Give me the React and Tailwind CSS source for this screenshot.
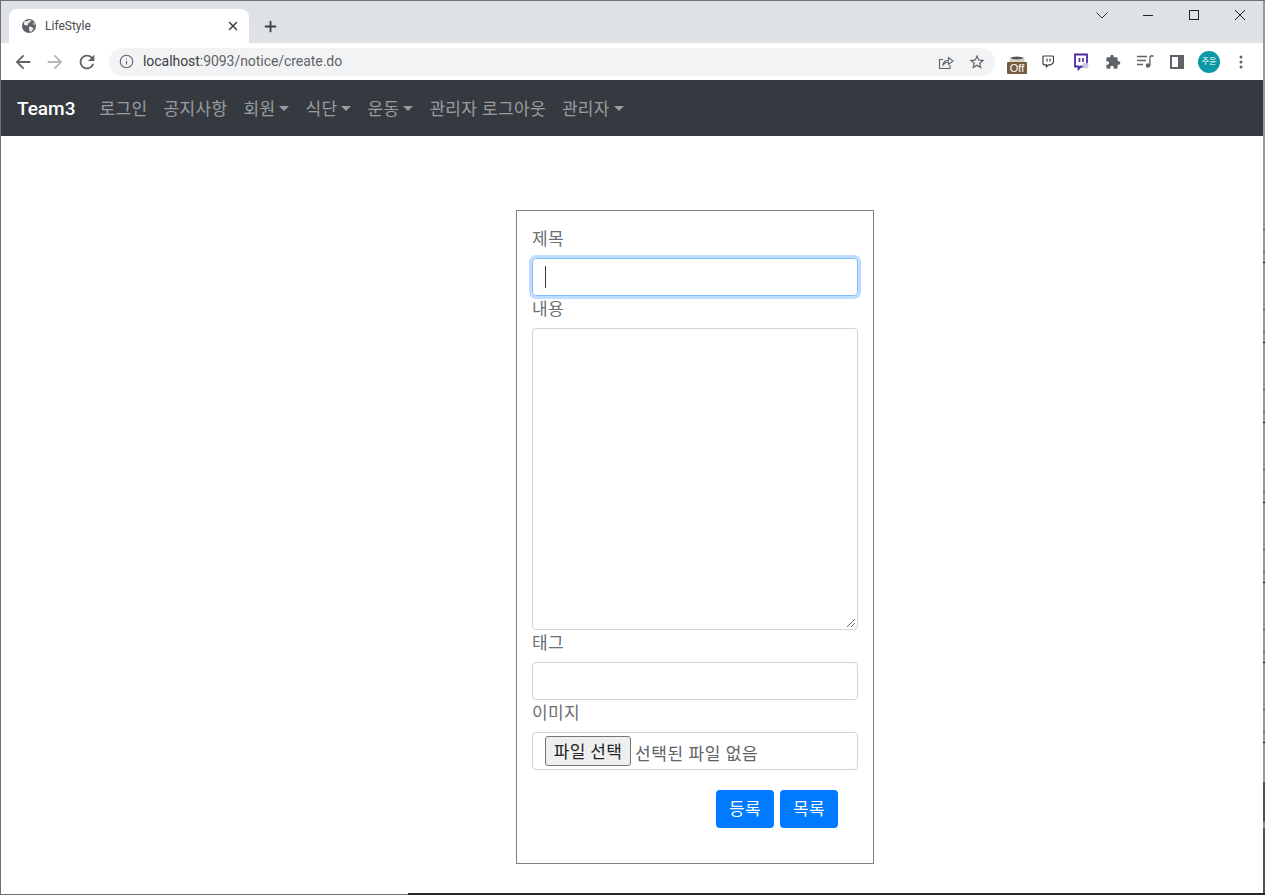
import { Info, Plus, X } from 'lucide-react'

const ticks = [
  { y: 229 }, { y: 251 }, { y: 262, dark: true },
  { y: 309 }, { y: 331 }, { y: 342, dark: true },
  { y: 389 }, { y: 411 }, { y: 422, dark: true },
  { y: 469 }, { y: 491 }, { y: 502, dark: true },
  { y: 549 }, { y: 571 }, { y: 582, dark: true },
  { y: 629 }, { y: 651 }, { y: 662, dark: true },
  { y: 709 }, { y: 731 }, { y: 742, dark: true },
]

function MaterialIcon({ size, d, className }) {
  return (
    <svg width={size} height={size} viewBox="0 0 24 24" fill="currentColor" className={className}>
      <path d={d} />
    </svg>
  )
}

function Globe() {
  return (
    <svg width="16" height="16" viewBox="0 0 16 16" className="shrink-0">
      <circle cx="8" cy="8" r="7" fill="#5f6368" />
      <path d="M3 3.500 6.500 3 8 2l2.500.5L9 4.500 7.500 5 7 7 4.500 7.500 3 6.500zM8 8.500l3 .5 1.500 2L10 14l-1.500-1-.5-2.500zM12 4l1.500 1 .5 2-1.500-.5z" fill="#e8eaed" />
    </svg>
  )
}

function NavItem({ label, caret }) {
  return (
    <a className="flex items-center px-2 pt-[2px] text-[17px] leading-6 tracking-[0.35px] text-white/50">
      {label}
      {caret && <span className="ml-[4px] mb-[1px] h-0 w-0 shrink-0 border-x-[5px] border-t-[5px] border-x-transparent border-t-white/50" />}
    </a>
  )
}

function Label({ children }) {
  return <label className="mb-[6px] block text-[17px] leading-[26px] tracking-[0.35px] text-[#6a6f74]">{children}</label>
}

function WindowControls() {
  return (
    <div className="mb-[23px] ml-auto flex items-center pr-[20px]">
      <svg width="12" height="7" viewBox="0 0 12 7" fill="none" stroke="#333" className="mr-[35px]">
        <path d="M.5.5 6 6 11.500.5" />
      </svg>
      <svg width="10" height="10" viewBox="0 0 10 10" stroke="#222" className="mr-[36px]" shapeRendering="crispEdges">
        <path d="M0 5.500h10" />
      </svg>
      <svg width="10" height="10" viewBox="0 0 10 10" fill="none" stroke="#222" className="mr-[36px]" shapeRendering="crispEdges">
        <rect x=".5" y=".5" width="9" height="9" />
      </svg>
      <svg width="10" height="10" viewBox="0 0 10 10" stroke="#222">
        <path d="M0 0 10 10M10 0 0 10" />
      </svg>
    </div>
  )
}

function ExtensionIcons() {
  return (
    <div className="flex items-center">
      {/* off badge */}
      <svg width="22" height="19" viewBox="0 0 22 19" className="ml-[11px] mt-[5px]">
        <path d="M4 2h14l1 6H3z" fill="#d8d4cc" />
        <ellipse cx="11" cy="3" rx="6" ry="1.500" fill="#555" />
        <rect x="1" y="7" width="20" height="12" rx="1" fill="#7a5a3c" />
        <text x="11" y="17" textAnchor="middle" fontSize="11" fill="#fff" fontFamily="Liberation Sans">Off</text>
      </svg>
      <svg width="12" height="13" viewBox="0 0 12 13" className="ml-[14px]">
        <path d="M2 1h8.500a1 1 0 0 1 1 .8v5.500L9 9.800H6.500L4.500 11.800V9.800H2a1 1 0 0 1-1-1V2a1 1 0 0 1 1-1z" fill="#fff" stroke="#3c4043" strokeWidth="1.200" />
        <path d="M5 3.500v3M8 3.500v3" stroke="#3c4043" strokeWidth="1.200" />
      </svg>
      <svg width="16" height="18" viewBox="0 0 16 18" className="ml-[19px]">
        <path d="M2 1.500h12v9l-3 3H8l-2.500 2.500v-2.500H2z" fill="#fff" stroke="#4b2a9e" strokeWidth="1.800" />
        <path d="M6.500 5v4M10 5v4" stroke="#4b2a9e" strokeWidth="1.600" />
        <circle cx="12.500" cy="12.500" r="3" fill="#c9c6e6" />
      </svg>
      <svg width="16" height="16" viewBox="0 0 24 24" className="ml-[16px]" fill="#5f6368">
        <path d="M20.500 11H19V7a2 2 0 0 0-2-2h-4V3.500a2.500 2.500 0 0 0-5 0V5H4a2 2 0 0 0-2 2v3.800h1.500a2.700 2.700 0 0 1 0 5.400H2V20a2 2 0 0 0 2 2h3.800v-1.500a2.700 2.700 0 0 1 5.400 0V22H17a2 2 0 0 0 2-2v-4h1.500a2.500 2.500 0 0 0 0-5z" />
      </svg>
      <svg width="17" height="15" viewBox="0 0 17 15" className="ml-[16px]" fill="none" stroke="#5f6368" strokeWidth="1.300">
        <path d="M0 2.500h10M0 6.500h9M0 10.500h6M13 2h3.500M13 2v9.500" />
        <circle cx="11" cy="11.500" r="2.200" fill="#5f6368" stroke="none" />
      </svg>
      <svg width="14" height="14" viewBox="0 0 14 14" className="ml-[16px]">
        <rect width="14" height="14" fill="#5f6368" />
        <rect x="2" y="2" width="6" height="10" fill="#fff" />
      </svg>
      <div className="ml-[14px] flex h-[22px] w-[22px] items-center justify-center rounded-full bg-[#0b98a5] text-[8px] leading-none text-white">주윤</div>
      <svg width="4" height="14" viewBox="0 0 4 14" className="ml-[19px]" fill="#5f6368">
        <circle cx="2" cy="2" r="1.500" />
        <circle cx="2" cy="7" r="1.500" />
        <circle cx="2" cy="12" r="1.500" />
      </svg>
    </div>
  )
}

export default function App() {
  return (
    <div className="relative flex h-[895px] w-[1265px] flex-col overflow-hidden border-l border-t border-[#6e7072] bg-white font-['Roboto','Noto_Sans_CJK_KR',sans-serif]">
      {/* tab strip */}
      <div className="flex h-[42px] shrink-0 items-end bg-[#dee1e6] pl-2">
        <div className="flex h-[34px] w-[240px] items-center rounded-t-lg bg-white pl-[12px] pr-[9px]">
          <Globe />
          <span className="ml-[8px] flex-1 text-[12px] text-[#45494e]">LifeStyle</span>
          <X size={14} strokeWidth={2.500} className="text-[#3c4043]" />
        </div>
        <Plus size={17} strokeWidth={2.500} className="mb-[8px] ml-[13px] text-[#3c4043]" />
        <WindowControls />
      </div>

      {/* toolbar */}
      <div className="flex h-[37px] shrink-0 items-center bg-white pl-[11px] pr-[17px]">
        <MaterialIcon size={22} className="text-[#5f6368]" d="M20 11H7.830l5.590-5.590L12 4l-8 8 8 8 1.410-1.410L7.830 13H20v-2z" />
        <MaterialIcon size={22} className="ml-[10px] text-[#b4b7bb]" d="M12 4l-1.410 1.410L16.170 11H4v2h12.170l-5.580 5.590L12 20l8-8z" />
        <MaterialIcon size={22} className="ml-[10px] text-[#5f6368]" d="M17.650 6.350A7.958 7.958 0 0 0 12 4c-4.420 0-7.990 3.580-7.990 8s3.570 8 7.990 8c3.730 0 6.840-2.550 7.730-6h-2.080A5.990 5.990 0 0 1 12 18c-3.310 0-6-2.690-6-6s2.690-6 6-6c1.660 0 3.140.69 4.220 1.780L13 11h7V4l-2.350 2.350z" />
        <div className="ml-[11px] flex h-[28px] w-[886px] items-center rounded-full bg-[#f1f3f4] pl-[10px] pr-[9px]">
          <Info size={15} strokeWidth={1.800} className="text-[#5f6368]" />
          <span className="ml-[9px] flex-1 text-[14px] tracking-[-0.05px] text-[#5f6368]"><span className="text-[#3c4043]">localhost</span>:9093/notice/create.do</span>
          <svg width="16" height="16" viewBox="0 0 16 16" fill="none" stroke="#5f6368" strokeWidth="1.100" className="mr-[14px]">
            <path d="M5 5.500H1.500v9h10.500V11" />
            <path d="M5 11c.3-3 2.500-4.800 5.500-4.800V3.500L15 7l-4.500 3.500V8C8.500 8 6.500 9 5 11z" />
          </svg>
          <MaterialIcon size={18} className="text-[#5f6368]" d="M22 9.240l-7.190-.62L12 2 9.190 8.630 2 9.240l5.460 4.730L5.820 21 12 17.270 18.180 21l-1.630-7.030L22 9.240zM12 15.400l-3.760 2.270 1-4.280-3.320-2.880 4.380-.38L12 6.100l1.710 4.040 4.380.38-3.320 2.880 1 4.280L12 15.400z" />
        </div>
        <ExtensionIcons />
      </div>

      {/* navbar */}
      <nav className="flex h-[56px] shrink-0 items-center bg-[#343a40] pl-[16px]">
        <span className="mr-4 pt-[2px] text-[19px] leading-[30px] font-medium text-white">Team3</span>
        <NavItem label="로그인" />
        <NavItem label="공지사항" />
        <NavItem label="회원" caret />
        <NavItem label="식단" caret />
        <NavItem label="운동" caret />
        <NavItem label="관리자 로그아웃" />
        <NavItem label="관리자" caret />
      </nav>

      {/* form */}
      <div className="flex flex-1 pt-[74px] pl-[515px]">
        <div className="flex h-[654px] w-[358px] flex-col border border-[#808080] px-[15px] pt-[15px]">
          <Label>제목</Label>
          <div className="flex h-[38px] items-center rounded border border-[#80bdff] pl-3 shadow-[0_0_0_3px_rgba(0,123,255,0.25)]">
            <span className="h-[22px] w-px bg-[#333]" />
          </div>
          <Label>내용</Label>
          <div className="relative h-[302px] rounded border border-[#ced4da]">
            <svg width="10" height="10" viewBox="0 0 10 10" className="absolute right-[1px] bottom-[1px]" stroke="#666">
              <path d="M1 9 9 1M5 9 9 5" />
            </svg>
          </div>
          <Label>태그</Label>
          <div className="h-[38px] rounded border border-[#ced4da]" />
          <Label>이미지</Label>
          <div className="flex h-[38px] items-center rounded border border-[#ced4da] pl-3">
            <button className="flex h-[30px] w-[86px] items-center justify-center rounded-[3px] border border-[#767676] bg-[#efefef] pt-[3px] text-[17px] tracking-[0.35px] whitespace-nowrap text-[#212529]">파일 선택</button>
            <span className="ml-1 pt-[6px] text-[17px] leading-6 tracking-[0.6px] text-[#5c6269]">선택된 파일 없음</span>
          </div>
          <div className="mt-5 flex justify-end gap-[6px] pr-5">
            <button className="h-[38px] w-[58px] rounded bg-[#007bff] pt-[2px] text-[17px] tracking-[0.35px] text-white">등록</button>
            <button className="h-[38px] w-[58px] rounded bg-[#007bff] pt-[2px] text-[17px] tracking-[0.35px] text-white">목록</button>
          </div>
        </div>
      </div>

      {/* desktop showing behind the window edge */}
      <svg width="2" height="895" viewBox="0 0 2 895" className="absolute top-[-1px] right-0">
        <rect width="2" height="895" fill="#9a9a9a" />
        <rect y="782" width="2" height="113" fill="#55524d" />
        <rect y="822" width="2" height="6" fill="#8e8c86" />
        {ticks.map((t) => (
          <rect key={t.y} y={t.y} width="2" height="1" fill={t.dark ? '#111' : '#555'} />
        ))}
      </svg>
      <div className="absolute right-0 bottom-0 left-0 h-px bg-[#6e7072]" />
      <div className="absolute right-0 bottom-0 left-[407px] h-[2px] bg-[#2a2722]" />
    </div>
  )
}
